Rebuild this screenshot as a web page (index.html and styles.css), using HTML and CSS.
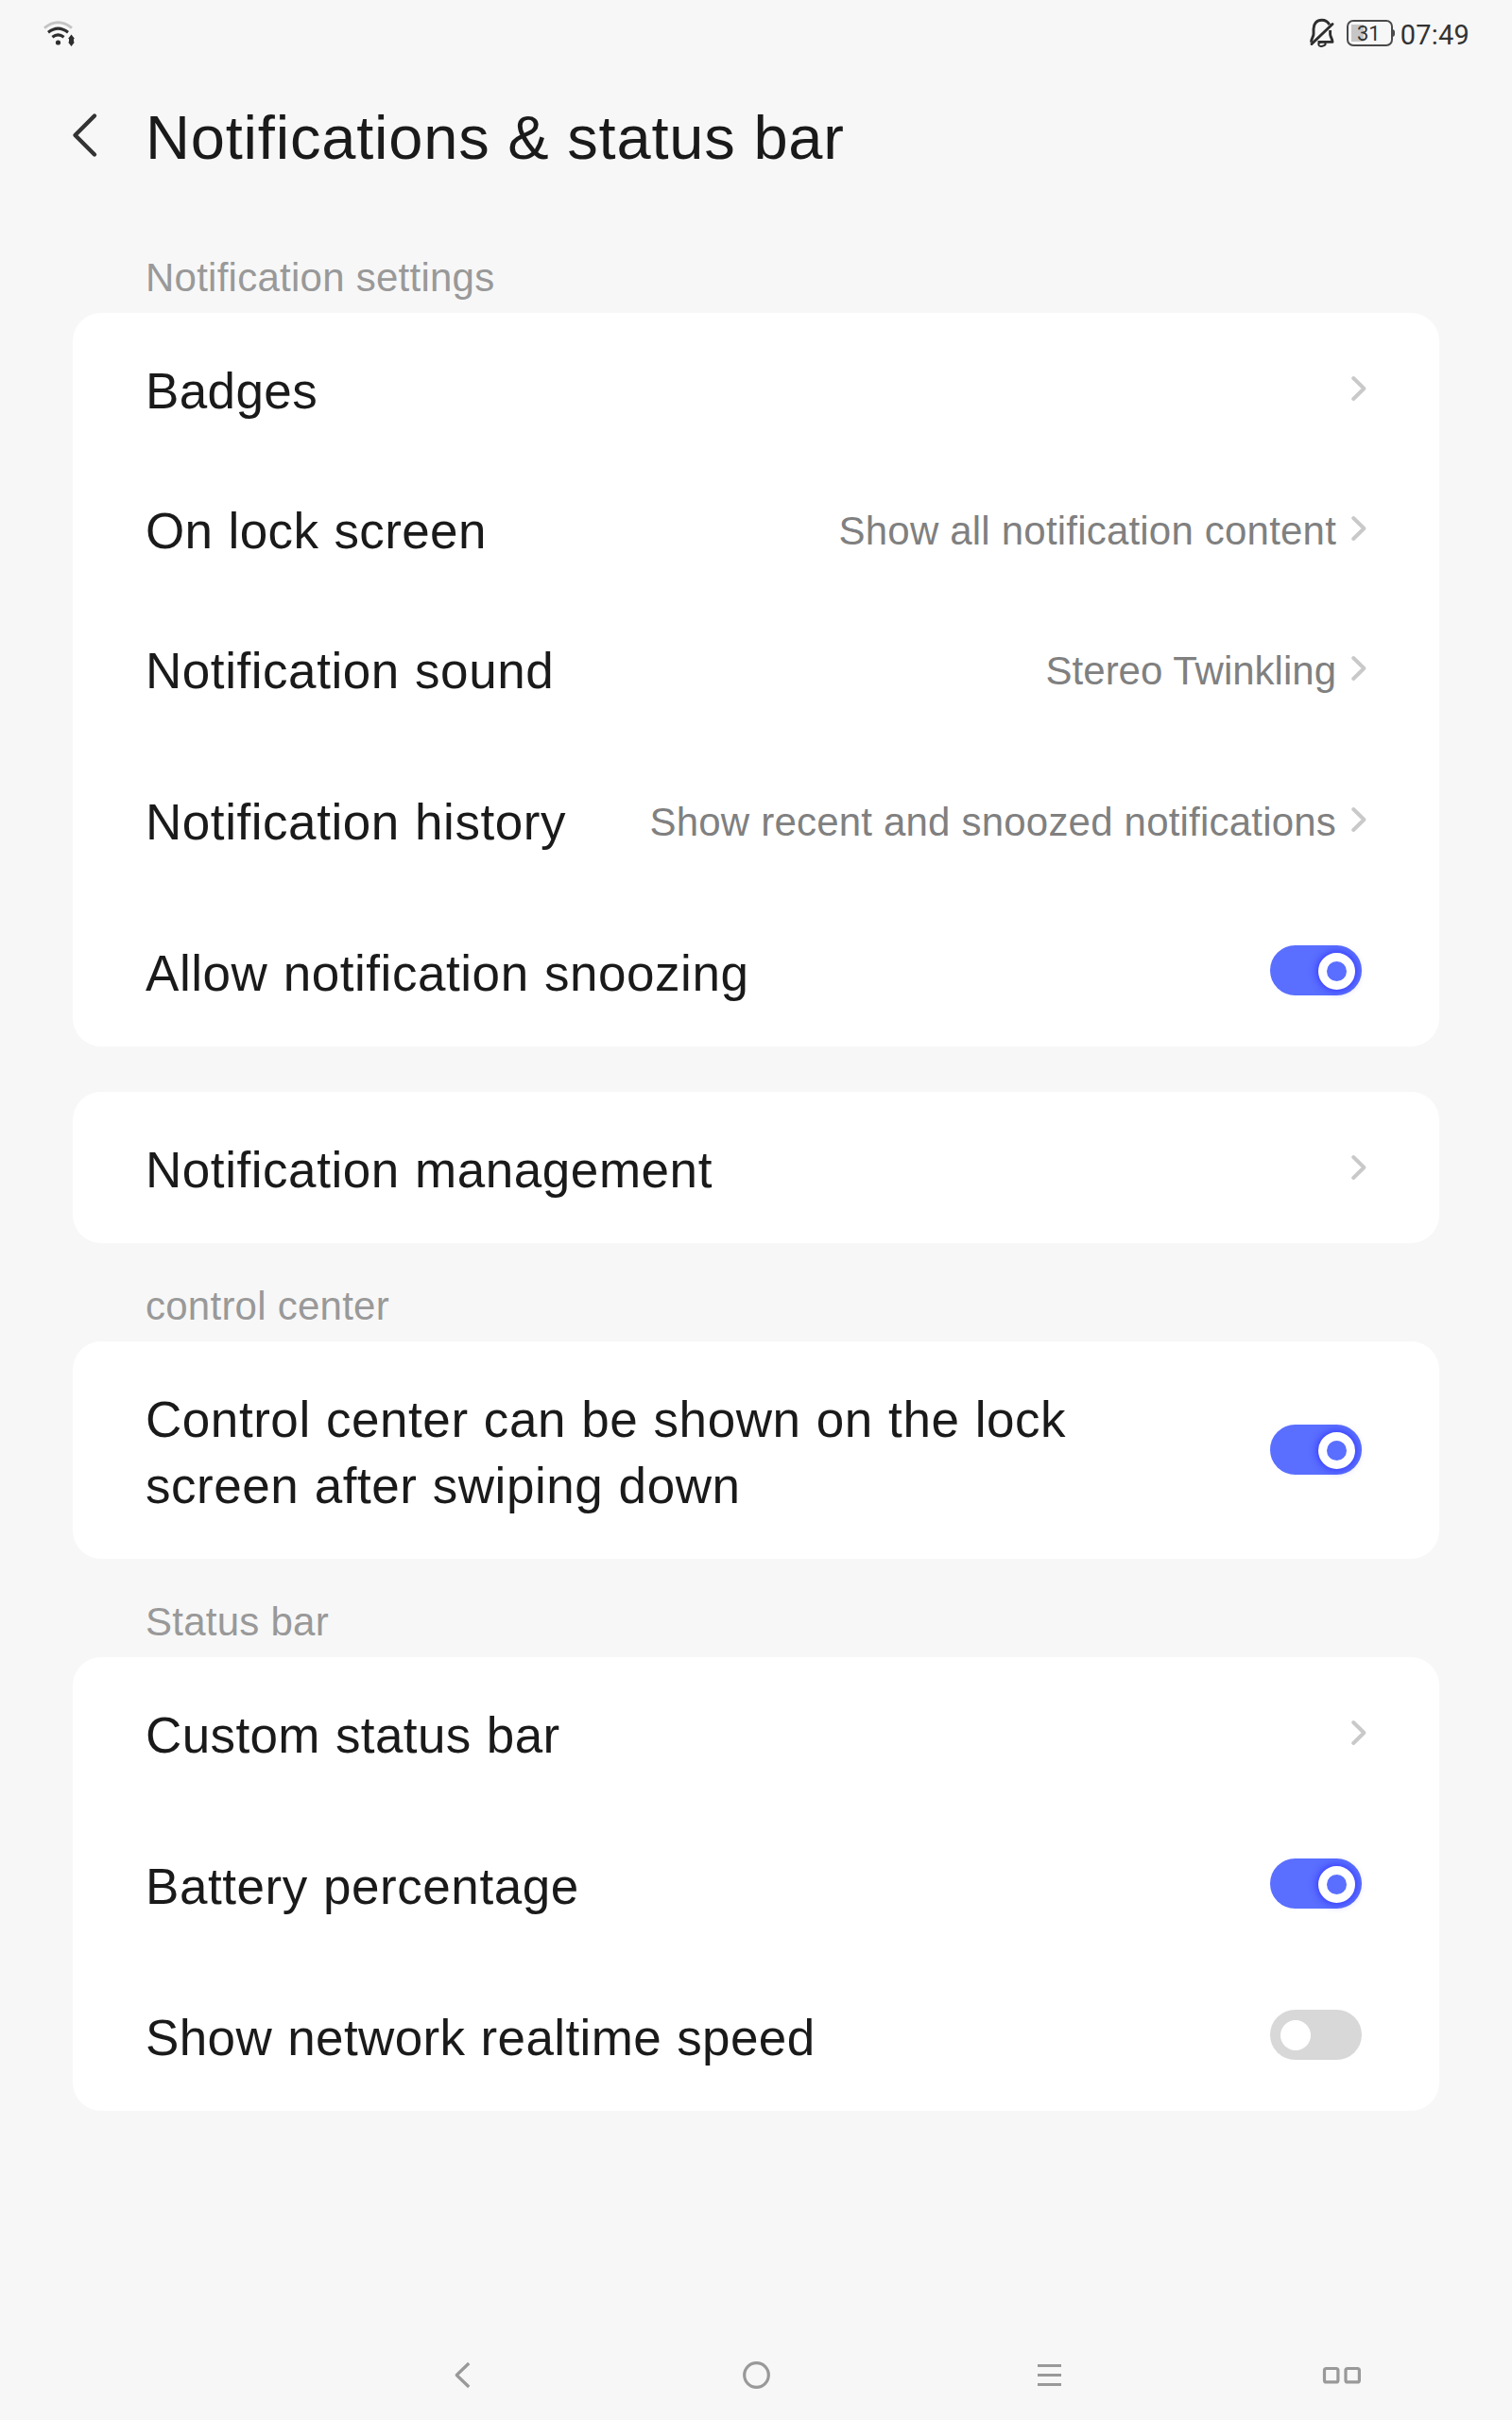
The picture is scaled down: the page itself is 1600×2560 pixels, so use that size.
FILE: index.html
```html
<!DOCTYPE html>
<html lang="en">
<head>
<meta charset="utf-8">
<title>Notifications &amp; status bar</title>
<link rel="stylesheet" href="styles.css">
</head>
<body>
<svg class="defs" aria-hidden="true">
  <symbol id="chevron" viewBox="0 0 16 28"><path d="M2.2 3 L13.4 14 L2.2 25" fill="none" stroke="#c9c9c9" stroke-width="3.9" stroke-linecap="round" stroke-linejoin="round"/></symbol>
</svg>
<div class="screen">
  <div class="status">
    <svg class="wifi" width="34" height="28" viewBox="0 0 34 28">
      <path d="M2 8.6 Q16.5 -3 31 8.6" fill="none" stroke="#c4c4c4" stroke-width="3"/>
      <path d="M6 13.3 Q16.5 5 27 13.3 M10.4 18.2 Q16.5 13.6 22.6 18.2" fill="none" stroke="#2e2e2e" stroke-width="3.1"/>
      <circle cx="16.5" cy="24" r="2.6" fill="#2e2e2e"/>
      <path d="M30.5 15.5 L34 20 H33 V23.5 H34 L30.5 28 L27 23.5 H28 V20 H27 Z" fill="#2e2e2e"/>
    </svg>
    <div class="status-right">
      <svg class="bell" width="28" height="32" viewBox="0 0 28 32">
        <path d="M21.8 7.2 C20 3.6 17 2.2 13.8 2.2 C8 2.2 5 6.6 5 11.5 V17 C5 20 2.5 21.6 2.5 25.8 M9.5 25.4 H25 C25 22 22.6 20 22.6 17 V13" fill="none" stroke="#2e2e2e" stroke-width="2.9" stroke-linejoin="round"/>
        <path d="M25 6.5 L3 27.5" stroke="#2e2e2e" stroke-width="3" stroke-linecap="round"/>
        <ellipse cx="14" cy="27.6" rx="3.7" ry="2.3" fill="none" stroke="#2e2e2e" stroke-width="2" transform="rotate(-12 14 27.6)"/>
      </svg>
      <div class="battery"><span>31</span></div>
      <div class="clock">07:49</div>
    </div>
  </div>

  <header class="header">
    <svg width="28" height="50" viewBox="0 0 28 50"><path d="M24 4.5 L3.5 25 L24 45.5" fill="none" stroke="#333" stroke-width="4.4" stroke-linecap="round" stroke-linejoin="round"/></svg>
    <h1>Notifications &amp; status bar</h1>
  </header>

  <main class="content">
    <h2 class="section">Notification settings</h2>
    <div class="card card-first">
      <div class="row compact"><span class="label tight">Badges</span><svg class="chev"><use href="#chevron"/></svg></div>
      <div class="row compact"><span class="label tight">On lock screen</span><span class="value">Show all notification content</span><svg class="chev"><use href="#chevron"/></svg></div>
      <div class="row compact last-compact"><span class="label">Notification sound</span><span class="value value-tight">Stereo Twinkling</span><svg class="chev"><use href="#chevron"/></svg></div>
      <div class="row"><span class="label">Notification history</span><span class="value">Show recent and snoozed notifications</span><svg class="chev"><use href="#chevron"/></svg></div>
      <div class="row"><span class="label">Allow notification snoozing</span><span class="toggle on"><i></i></span></div>
    </div>
    <div class="card card-single">
      <div class="row"><span class="label">Notification management</span><svg class="chev"><use href="#chevron"/></svg></div>
    </div>
    <h2 class="section">control center</h2>
    <div class="card">
      <div class="row tall"><span class="label wrap">Control center can be shown on the lock screen after swiping down</span><span class="toggle on"><i></i></span></div>
    </div>
    <h2 class="section">Status bar</h2>
    <div class="card">
      <div class="row"><span class="label tight">Custom status bar</span><svg class="chev"><use href="#chevron"/></svg></div>
      <div class="row"><span class="label">Battery percentage</span><span class="toggle on"><i></i></span></div>
      <div class="row"><span class="label tight">Show network realtime speed</span><span class="toggle"><i></i></span></div>
    </div>
  </main>

  <nav class="nav">
    <svg width="34" height="34" viewBox="0 0 34 34"><path d="M23.2 5 L10.2 17.5 L23.2 30"/></svg>
    <svg width="34" height="34" viewBox="0 0 34 34"><circle cx="17.5" cy="17.5" r="12.8"/></svg>
    <svg width="34" height="34" viewBox="0 0 34 34"><path d="M5 7.5 H30 M5 17.5 H30 M5 27.5 H30"/></svg>
    <svg width="46" height="34" viewBox="0 0 46 34"><rect x="4.5" y="10.5" width="14.4" height="14.4" rx="2"/><rect x="27" y="10.5" width="14.4" height="14.4" rx="2"/></svg>
  </nav>
</div>
</body>
</html>
```

FILE: styles.css
```css
* { box-sizing: border-box; }
body {
  margin: 0;
  background: #f7f7f7;
  color: #1a1a1a;
  font-family: "Liberation Sans", Arial, sans-serif;
}
.defs { display: none; }
.screen {
  width: 1600px;
  height: 2560px;
  display: flex;
  flex-direction: column;
}
.status {
  height: 72px;
  padding: 0 45px 0 45px;
  display: flex;
  align-items: flex-start;
  justify-content: space-between;
}
.wifi { margin-top: 21px; }
.status-right { display: flex; align-items: flex-start; }
.bell { margin: 19px 12px 0 0; }
.battery {
  position: relative;
  width: 49px;
  height: 28px;
  margin: 21px 8px 0 0;
  border: 2px solid #4a4a4a;
  border-radius: 7px;
  background: linear-gradient(#c6c6c6, #c6c6c6) 3px 3px / 13px 18px no-repeat;
  font: 22px/26px Roboto, sans-serif;
  color: #333;
  text-align: center;
}
.battery span { display: block; margin: 0 2px 0 0; }
.battery::after {
  content: "";
  position: absolute;
  right: -4px;
  top: 8px;
  width: 3px;
  height: 8px;
  border-radius: 0 3px 3px 0;
  background: #4a4a4a;
}
.clock {
  margin-top: 16px;
  font: 29px/42px Roboto, sans-serif;
  letter-spacing: 0.2px;
  color: #333;
}
.header {
  height: 142px;
  padding: 0 76px;
  display: flex;
  align-items: center;
  gap: 50px;
}
h1 {
  margin: 6px 0 0;
  font-size: 65px;
  line-height: 80px;
  font-weight: 400;
  letter-spacing: 0.8px;
  white-space: nowrap;
}
.content { padding: 13px 77px 0; }
.section {
  height: 104px;
  margin: 0;
  padding: 43px 77px 13px;
  font-size: 42px;
  line-height: 48px;
  font-weight: 400;
  letter-spacing: 0.25px;
  color: #999;
}
.card { background: #fff; border-radius: 30px; }
.card-first { padding-top: 6px; }
.card-single { margin-top: 48px; }
.row {
  height: 160px;
  padding: 0 77px;
  display: flex;
  align-items: center;
}
.compact { height: 148px; }
.last-compact { margin-bottom: 6px; }
.tall { height: 230px; }
.label {
  flex: 1;
  padding-top: 5px;
  font-size: 53px;
  line-height: 70px;
  letter-spacing: 0.55px;
  word-spacing: 1px;
  white-space: nowrap;
}
.tight { letter-spacing: 0.38px; }
.wrap { flex: 0 0 1040px; margin-right: auto; white-space: normal; }
.value {
  padding-top: 6px;
  margin-right: 16px;
  font-size: 42px;
  line-height: 56px;
  letter-spacing: 0.2px;
  white-space: nowrap;
  color: #808080;
}
.value-tight { letter-spacing: 0; }
.chev { flex: none; width: 16px; height: 28px; }
.toggle {
  flex: none;
  display: flex;
  align-items: center;
  width: 97px;
  height: 53px;
  margin: 0 5px 1px 0;
  padding: 1px 11px 0;
  border-radius: 27px;
  background: #d8d8d8;
}
.toggle i { width: 32px; height: 32px; border-radius: 50%; background: #fff; }
.toggle.on {
  justify-content: flex-end;
  padding: 1px 7px 0;
  background: #5a6fff;
}
.toggle.on i {
  width: 39px;
  height: 39px;
  border: 9.5px solid #fff;
  background: #5a6fff;
  box-shadow: 0 0 9px 1px #3333ff;
}
.nav {
  height: 96px;
  margin-top: auto;
  padding: 0 25px 0 335px;
  display: grid;
  grid-template-columns: repeat(4, 310px);
  align-items: center;
  justify-items: center;
}
.nav svg { fill: none; stroke: #999; stroke-width: 3.2; stroke-linejoin: round; }
```
